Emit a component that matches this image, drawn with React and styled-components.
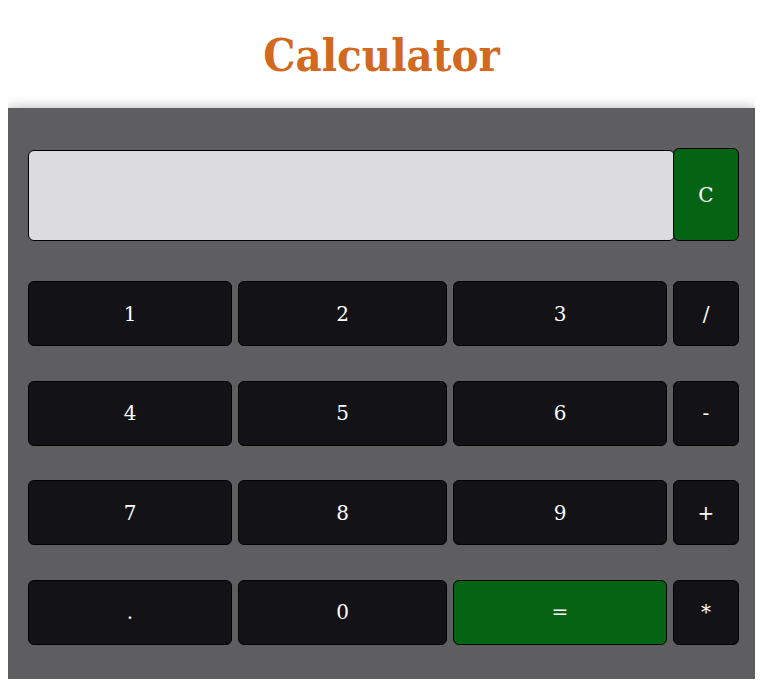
import React from "react";
import styled, { createGlobalStyle } from "styled-components";

const GlobalStyle = createGlobalStyle`
  body {
    margin: 8px;
    background: #ffffff;
    font-family: "DejaVu Serif", "Liberation Serif", serif;
  }
`;

const keys = [
  ["1", "2", "3", "/"],
  ["4", "5", "6", "-"],
  ["7", "8", "9", "+"],
  [".", "0", "=", "*"],
];

const App = () => {
  const [value, setValue] = React.useState("");

  const press = (k) => {
    if (k === "=") {
      try {
        // eslint-disable-next-line
        setValue(String(Function(`return (${value})`)()));
      } catch (e) {
        setValue("Error");
      }
      return;
    }
    setValue(value + k);
  };

  return (
    <>
      <GlobalStyle />
      <Title>Calculator</Title>
      <Panel>
        <DisplayRow>
          <Display value={value} readOnly />
          <Key $green $tall onClick={() => setValue("")}>
            C
          </Key>
        </DisplayRow>
        <Pad>
          {keys.flat().map((k) => (
            <Key key={k} $green={k === "="} onClick={() => press(k)}>
              {k}
            </Key>
          ))}
        </Pad>
      </Panel>
    </>
  );
};

const Title = styled.h1`
  margin: 0;
  padding: 22px 0 27px;
  text-align: center;
  color: #d2691e;
  font-family: "DejaVu Serif", "Liberation Serif", serif;
  font-stretch: condensed;
  font-size: 45px;
  font-weight: bold;
  line-height: 51px;
`;

const Panel = styled.div`
  background-color: #5e5e60;
  box-shadow: 0 3px 14px rgba(0, 0, 0, 0.45);
  margin-right: -2px;
  padding: 40px 18px 34px 20px;
`;

const DisplayRow = styled.div`
  display: flex;
  align-items: center;
  & > button {
    width: 66px;
    margin-left: -2px;
  }
`;

const Display = styled.input`
  box-sizing: border-box;
  height: 91px;
  width: 647px;
  margin: 1px 0 0;
  background: #dcdbe0;
  border: 1px solid #000;
  border-radius: 6px;
  font-family: "DejaVu Serif", serif;
  font-size: 28px;
  padding: 0 12px;
  outline: none;
`;

const Pad = styled.div`
  display: grid;
  grid-template-columns: 204px 209px 214px 66px;
  column-gap: 6px;
  row-gap: 34.5px;
  margin-top: 40px;
`;

const Key = styled.button`
  box-sizing: border-box;
  height: ${(p) => (p.$tall ? "93px" : "65px")};
  background: ${(p) => (p.$green ? "#046414" : "#131216")};
  color: #ffffff;
  border: 1px solid #000;
  border-radius: 6px;
  font-family: "DejaVu Serif", "Liberation Serif", serif;
  font-size: 20px;
  cursor: pointer;
  padding: 0;
`;

export default App;
